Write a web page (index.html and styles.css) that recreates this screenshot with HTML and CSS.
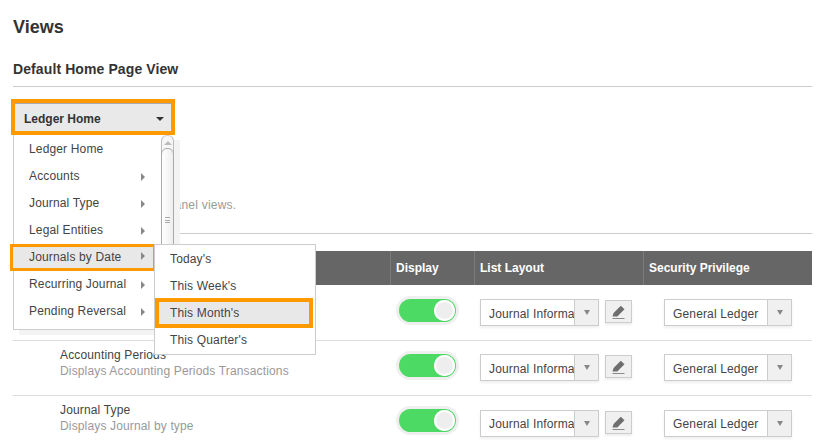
FILE: index.html
```html
<!DOCTYPE html>
<html lang="en">
<head>
<meta charset="utf-8">
<title>Views</title>
<link rel="stylesheet" href="styles.css">
</head>
<body>
<main class="page">
  <h1 class="title">Views</h1>
  <h2 class="subtitle">Default Home Page View</h2>
  <button class="dropdown" type="button"><span>Ledger Home</span><i class="caret"></i></button>
  <p class="note">Choose a view for the main panel views.</p>
  <hr class="rule">

  <section class="table">
    <div class="row head">
      <div class="cell">Name</div>
      <div class="cell">Display</div>
      <div class="cell">List Layout</div>
      <div class="cell">Security Privilege</div>
    </div>

    <div class="row">
      <div class="name"><b>Accounts</b><span>Displays Accounts Transactions</span></div>
      <div class="toggle-cell"><span class="toggle"><i></i></span></div>
      <div class="layout-cell">
        <div class="select wide"><span class="value">Journal Information</span><span class="arrow"><i></i></span></div>
        <span class="edit"><svg viewBox="0 0 16 16" width="16" height="16"><path d="M1.5 12.5 2.6 9 9.8 1.8l3.7 3.4-7.2 7.2z" fill="#6e6e6e"/><path d="M1.5 14.5h12" stroke="#8a8a8a" stroke-width="1"/></svg></span>
      </div>
      <div class="sec-cell"><div class="select"><span class="value">General Ledger</span><span class="arrow"><i></i></span></div></div>
    </div>

    <div class="row">
      <div class="name"><b>Accounting Periods</b><span>Displays Accounting Periods Transactions</span></div>
      <div class="toggle-cell"><span class="toggle"><i></i></span></div>
      <div class="layout-cell">
        <div class="select wide"><span class="value">Journal Information</span><span class="arrow"><i></i></span></div>
        <span class="edit"><svg viewBox="0 0 16 16" width="16" height="16"><path d="M1.5 12.5 2.6 9 9.8 1.8l3.7 3.4-7.2 7.2z" fill="#6e6e6e"/><path d="M1.5 14.5h12" stroke="#8a8a8a" stroke-width="1"/></svg></span>
      </div>
      <div class="sec-cell"><div class="select"><span class="value">General Ledger</span><span class="arrow"><i></i></span></div></div>
    </div>

    <div class="row low">
      <div class="name"><b>Journal Type</b><span>Displays Journal by type</span></div>
      <div class="toggle-cell"><span class="toggle"><i></i></span></div>
      <div class="layout-cell">
        <div class="select wide"><span class="value">Journal Information</span><span class="arrow"><i></i></span></div>
        <span class="edit"><svg viewBox="0 0 16 16" width="16" height="16"><path d="M1.5 12.5 2.6 9 9.8 1.8l3.7 3.4-7.2 7.2z" fill="#6e6e6e"/><path d="M1.5 14.5h12" stroke="#8a8a8a" stroke-width="1"/></svg></span>
      </div>
      <div class="sec-cell"><div class="select"><span class="value">General Ledger</span><span class="arrow"><i></i></span></div></div>
    </div>
  </section>

  <nav class="menu">
    <ul class="items">
      <li>Ledger Home</li>
      <li class="more">Accounts</li>
      <li class="more">Journal Type</li>
      <li class="more">Legal Entities</li>
      <li class="more current">Journals by Date</li>
      <li class="more">Recurring Journal</li>
      <li class="more">Pending Reversal</li>
    </ul>
    <div class="scrollbar">
      <span class="up"></span>
      <span class="thumb"><i></i></span>
    </div>
  </nav>

  <ul class="submenu">
    <li>Today's</li>
    <li>This Week's</li>
    <li class="picked">This Month's</li>
    <li>This Quarter's</li>
  </ul>
</main>
</body>
</html>
```

FILE: styles.css
```css
* { box-sizing: border-box; }
html, body { margin: 0; height: 100%; overflow: hidden; background: #fff; }
body { font-family: "Liberation Sans", Arial, sans-serif; font-size: 12px; letter-spacing: .15px; color: #444; }
.page { position: relative; width: 825px; height: 443px; padding: 16px 13px 0; }
.title { margin: 0; font-size: 18px; line-height: 22px; font-weight: 700; letter-spacing: 0; color: #333; }
.subtitle { margin: 21px 0 0; padding: 1px 0 8px; font-size: 14px; line-height: 18px; font-weight: 700; letter-spacing: .1px; color: #333; border-bottom: 1px solid #ccc; }

.dropdown { display: flex; align-items: center; justify-content: space-between; width: 164px; height: 36px; margin: 12px 0 0 -2px; padding: 3px 7px 0 9px; border: 4px solid #f90; background: #e9e9e9; box-shadow: inset 0 1px 0 #aaa; font: 700 12px "Liberation Sans", Arial, sans-serif; color: #333; }
.caret { width: 0; height: 0; border-left: 4px solid transparent; border-right: 4px solid transparent; border-top: 4px solid #333; }

.note { margin: 62px 0 0; font-size: 12px; line-height: 16px; letter-spacing: .22px; color: #999; }
.rule { margin: 20px 0 0; border: 0; border-top: 1px solid #ccc; }

.table { margin-top: 17px; }
.row { display: grid; grid-template-columns: 377px 84px 169px 169px; height: 55px; border-bottom: 1px solid #ddd; }
.row.head { height: 34px; margin-bottom: 1px; background: #666; border-bottom: 0; font-weight: 700; letter-spacing: 0; color: #fff; }
.cell { display: flex; align-items: center; padding-left: 5px; border-left: 1px solid #7c7c7c; }
.cell:first-child { border-left: 0; }

.name { display: flex; flex-direction: column; gap: 2px; padding: 7px 0 0 47px; line-height: 14px; }
.name b { font-weight: 400; color: #444; }
.name span { color: #999; }

.toggle-cell { padding: 13px 0 0 9px; }
.toggle { display: flex; align-items: center; justify-content: flex-end; width: 57px; height: 23px; border-radius: 12px; background: #4cd964; box-shadow: 0 0 0 3px #efefef; }
.toggle i { width: 21px; height: 21px; margin-right: 1px; border-radius: 50%; background: #eee; box-shadow: inset 0 0 0 2px #fff; }

.layout-cell { display: flex; align-items: flex-start; gap: 6px; padding: 13px 0 0 6px; }
.sec-cell { padding: 13px 0 0 21px; }
.low .layout-cell, .low .sec-cell { padding-top: 14px; }
.low .value { padding-top: 0; }

.select { display: flex; width: 128px; height: 27px; border: 1px solid #ccc; background: #fff; box-shadow: 0 2px 2px #f0f0f0; }
.select.wide { width: 119px; }
.value { flex: 1; min-width: 0; padding: 1px 0 0 8px; line-height: 26px; white-space: nowrap; overflow: hidden; }
.arrow { display: flex; flex: none; align-items: center; justify-content: center; width: 24px; background: #f0f0f0; border-left: 1px solid #ccc; }
.arrow i { width: 0; height: 0; border-left: 3.5px solid transparent; border-right: 3.5px solid transparent; border-top: 5px solid #888; }

.edit { display: flex; align-items: center; justify-content: center; width: 27px; height: 23px; margin-top: 1px; border: 1px solid #ccc; background: #f0f0f0; box-shadow: 0 2px 2px #eee; }

.menu { position: absolute; left: 13px; top: 135px; display: flex; width: 161px; height: 195px; background: #fff; border-left: 1px solid #ccc; border-bottom: 1px solid #ccc; box-shadow: 6px 5px 0 #f3f3f3; }
.items { flex: 1; margin: 0; padding: 1px 0 0; list-style: none; }
.items li { position: relative; height: 27px; padding-left: 15px; line-height: 27px; color: #444; }
.items li.more::after { content: ""; position: absolute; left: 127px; top: 10px; border-left: 4px solid #888; border-top: 4px solid transparent; border-bottom: 4px solid transparent; }
.items li.current { margin: 0 0 0 -4px; padding-left: 16px; line-height: 21px; background: #e8e8e8; border: 3px solid #f90; width: 146px; }
.items li.current::after { left: 128px; top: 5px; }
.scrollbar { display: flex; flex: none; flex-direction: column; width: 13px; border: 1px solid #bbb; border-top: 1px solid #ccc; border-radius: 6px 6px 0 0; background: #f6f6f6; }
.up { position: relative; height: 12px; }
.up::after { content: ""; position: absolute; left: 2px; top: 5px; border-left: 4px solid transparent; border-right: 4px solid transparent; border-bottom: 4px solid #bbb; }
.thumb { position: relative; flex: 1; margin: 0 -1px; border: 1px solid #aaa; border-radius: 6px 6px 0 0; background: linear-gradient(90deg, #fff, #eee); }
.thumb i { position: absolute; left: 3px; top: 68px; width: 5px; height: 6px; border-top: 1px solid #aaa; border-bottom: 1px solid #aaa; }
.thumb i::after { content: ""; display: block; height: 1px; margin-top: 1.5px; background: #aaa; }

.submenu { position: absolute; left: 154px; top: 244px; width: 162px; height: 111px; margin: 0; padding: 0; list-style: none; background: #fff; border: 1px solid #ccc; }
.submenu li { height: 27px; padding-left: 15px; line-height: 29px; color: #444; }
.submenu li.picked { width: 158px; height: 30px; margin: -1px 0 -2px; padding-left: 11px; line-height: 22px; background: #e8e8e8; border: 4px solid #f90; }
```
